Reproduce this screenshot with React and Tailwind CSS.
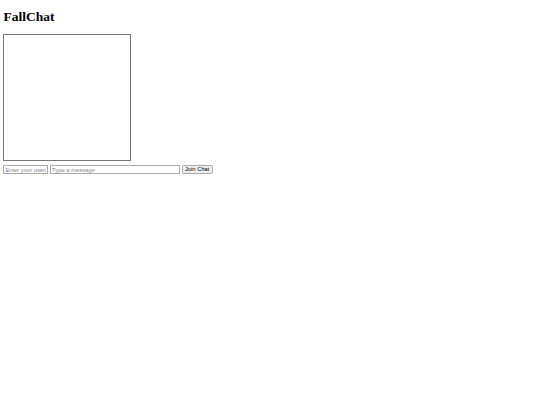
export default function App() {
  return (
    <div className="min-h-[405px] bg-white px-[3.4px] pt-[9px] font-['Liberation_Serif',serif] text-black">
      <h1 className="m-0 mb-[9px] text-[13.5px] font-bold leading-[15.5px]">FallChat</h1>
      <div className="h-[127px] w-[127.5px] border border-[#777] bg-white"></div>
      <div className="mt-[4.6px] flex items-center gap-[1.7px] font-['Liberation_Sans',sans-serif]">
        <input
          className="h-[9px] w-[45px] border border-[#aaa] bg-white px-[1px] text-[5.8px] leading-none text-black outline-none placeholder:text-[#888]"
          placeholder="Enter your username"
        />
        <input
          className="h-[9px] w-[130px] border border-[#aaa] bg-white px-[1px] text-[5.8px] leading-none text-black outline-none placeholder:text-[#888]"
          placeholder="Type a message"
        />
        <button className="h-[9px] rounded-[1.3px] border border-[#aaa] bg-[#efefef] px-[2.2px] text-[5.8px] leading-none text-black">
          Join Chat
        </button>
      </div>
    </div>
  );
}
